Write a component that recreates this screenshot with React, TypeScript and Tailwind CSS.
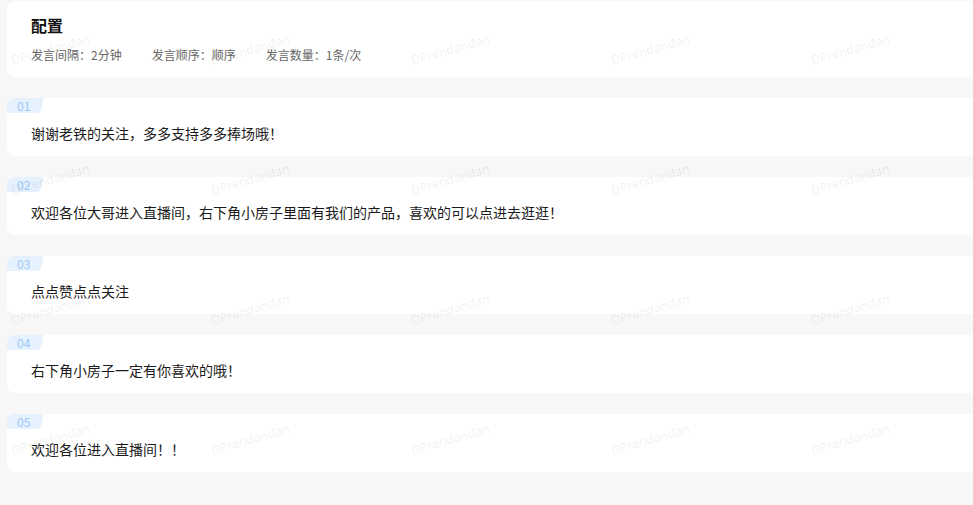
const config = [
  { label: "发言间隔", value: "2分钟" },
  { label: "发言顺序", value: "顺序" },
  { label: "发言数量", value: "1条/次" },
];

const messages = [
  "谢谢老铁的关注，多多支持多多捧场哦！",
  "欢迎各位大哥进入直播间，右下角小房子里面有我们的产品，喜欢的可以点进去逛逛！",
  "点点赞点点关注",
  "右下角小房子一定有你喜欢的哦！",
  "欢迎各位进入直播间！！",
];

function Watermark() {
  const cells = Array.from({ length: 20 });
  return (
    <div className="pointer-events-none absolute inset-0 overflow-hidden" aria-hidden>
      <div className="grid grid-cols-[repeat(5,200px)] auto-rows-[130px]">
        {cells.map((_, i) => (
          <div key={i} className="relative">
            <div className="flex h-[100px] w-[100px] items-center justify-center">
              <span className="-rotate-[16deg] whitespace-nowrap text-[12.5px] font-medium text-black/[0.08] [font-family:'Open_Sans',sans-serif]">
                DPrendandan
              </span>
            </div>
          </div>
        ))}
      </div>
    </div>
  );
}

function MessageCard({ index, text }: { index: number; text: string }) {
  const num = String(index + 1).padStart(2, "0");
  return (
    <div className="rounded-l-lg bg-white pb-[13px]">
      <div className="flex h-[15px] w-[36px] items-center rounded-tl-lg rounded-br-[6px_14px] bg-[#e6f1fe] pl-[10px] text-[12px] leading-none text-[#9dc8f6]">
        {num}
      </div>
      <p className="mt-[10px] pl-[24px] text-[14px] leading-[20px] text-[#1a1a1a]">
        {text}
      </p>
    </div>
  );
}

export default function App() {
  return (
    <div className="relative min-h-screen overflow-hidden bg-[#f7f7f7] pl-[7px] pt-px [font-family:'Noto_Sans_CJK_SC','Microsoft_YaHei',sans-serif]">
      <div className="flex flex-col gap-[21px]">
        <div className="rounded-l-lg bg-white pb-[13px] pl-[24px] pt-[12px]">
          <h1 className="text-[16px] font-bold leading-[24px] text-[#111]">配置</h1>
          <div className="mt-[9px] flex gap-[30px] text-[12px] leading-[18px] text-[#666]">
            {config.map((c) => (
              <span key={c.label}>
                {c.label}：{c.value}
              </span>
            ))}
          </div>
        </div>
        {messages.map((m, i) => (
          <MessageCard key={i} index={i} text={m} />
        ))}
      </div>
      <Watermark />
    </div>
  );
}
